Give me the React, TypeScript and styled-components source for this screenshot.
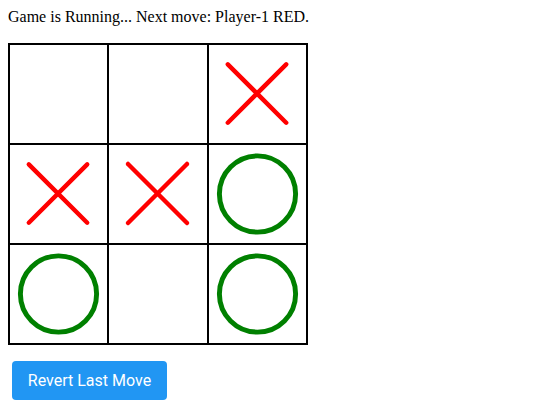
import React from "react";
import styled, { createGlobalStyle } from "styled-components";

const Global = createGlobalStyle`
  html, body { margin: 0; padding: 0; background: #fff; }
  body { padding: 8px; font-family: "Liberation Serif", "Times New Roman", serif; font-size: 16px; color: #000; }
`;

const Status = styled.div`
  line-height: 18px;
  height: 18px;
  margin-bottom: 17px;
`;

const Board = styled.div`
  display: grid;
  grid-template-columns: 97px 98px 97px;
  grid-template-rows: repeat(3, 98px);
  gap: 2px;
  background: #000;
  border: 2px solid #000;
  width: max-content;
`;

const Cell = styled.div`
  background: #fff;
  display: flex;
  align-items: center;
  justify-content: center;
  overflow: hidden;
`;

const Button = styled.button`
  margin: 16px 4px 0;
  width: 155px;
  height: 39px;
  background: #2196f3;
  color: #fff;
  border: none;
  border-radius: 4px;
  font-family: Roboto, "Open Sans", sans-serif;
  font-size: 16px;
  padding: 0 12px;
  cursor: pointer;
`;

type Mark = "X" | "O" | null;

const XMark = () => (
  <svg width="98" height="98" viewBox="0 0 98 98">
    <line x1="19" y1="19" x2="78" y2="78" stroke="#ff0000" strokeWidth="4.5" strokeLinecap="round" />
    <line x1="78" y1="19" x2="19" y2="78" stroke="#ff0000" strokeWidth="4.5" strokeLinecap="round" />
  </svg>
);

const OMark = () => (
  <svg width="98" height="98" viewBox="0 0 98 98">
    <circle cx="49" cy="49" r="38.5" fill="none" stroke="#008000" strokeWidth="5" />
  </svg>
);

const board: Mark[] = [null, null, "X", "X", "X", "O", "O", null, "O"];

export default function App() {
  return (
    <>
      <Global />
      <Status>Game is Running... Next move: Player-1 RED.</Status>
      <Board>
        {board.map((m, i) => (
          <Cell key={i}>{m === "X" ? <XMark /> : m === "O" ? <OMark /> : null}</Cell>
        ))}
      </Board>
      <Button>Revert Last Move</Button>
    </>
  );
}
